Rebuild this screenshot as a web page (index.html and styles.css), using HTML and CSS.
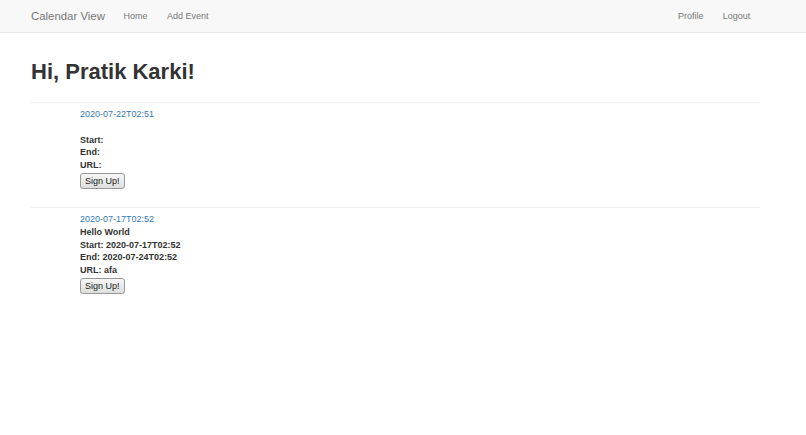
FILE: index.html
```html
<!DOCTYPE html>
<html lang="en">
<head>
    <meta charset="UTF-8">
    <meta name="viewport" content="width=device-width, initial-scale=1.0">
    <title>Calendar View</title>
    <link rel="stylesheet" href="styles.css">
</head>
<body>

<nav class="navbar">
    <div class="navbar-inner">
        <a class="brand" href="#">Calendar View</a>
        <ul class="nav">
            <li><a href="#">Home</a></li>
            <li><a href="#">Add Event</a></li>
        </ul>
        <ul class="nav nav-right">
            <li><a href="#">Profile</a></li>
            <li><a href="#">Logout</a></li>
        </ul>
    </div>
</nav>

<div class="container">
    <h1>Hi, Pratik Karki!</h1>

    <hr>
    <div class="event">
        <a class="event-date" href="#">2020-07-22T02:51</a>
        <p class="event-title"></p>
        <p>Start: </p>
        <p>End: </p>
        <p>URL: </p>
        <button type="button">Sign Up!</button>
    </div>

    <hr>
    <div class="event">
        <a class="event-date" href="#">2020-07-17T02:52</a>
        <p class="event-title">Hello World</p>
        <p>Start: 2020-07-17T02:52</p>
        <p>End: 2020-07-24T02:52</p>
        <p>URL: afa</p>
        <button type="button">Sign Up!</button>
    </div>
</div>

</body>
</html>
```

FILE: styles.css
```css
* {
    box-sizing: border-box;
}

body {
    margin: 0;
    font-family: "Liberation Sans", Arial, sans-serif;
    font-size: 9px;
    line-height: 12.8px;
    color: #333;
    background-color: #fff;
}

a {
    text-decoration: none;
}

.navbar {
    background-color: #f8f8f8;
    border-bottom: 1px solid #e7e7e7;
}

.navbar-inner {
    display: flex;
    align-items: center;
    height: 32px;
    padding: 0 46px 0 31px;
}

.brand {
    color: #777;
    font-size: 11.4px;
    margin-right: 9px;
}

.nav {
    display: flex;
    list-style: none;
    margin: 0;
    padding: 0;
}

.nav a {
    display: block;
    padding: 0 9.7px;
    color: #777;
    font-size: 9px;
}

.nav-right {
    margin-left: auto;
}

.container {
    padding: 0 46px 0 31px;
}

h1 {
    margin: 26px 0 0;
    font-size: 22px;
    line-height: 25px;
    font-weight: bold;
    color: #333;
}

hr {
    margin: 18px 0 5px;
    border: 0;
    border-top: 1px solid #eee;
}

.event {
    margin-left: 49px;
    font-weight: bold;
}

.event-date {
    display: block;
    font-weight: normal;
    color: #337ab7;
}

.event p {
    margin: 0;
    min-height: 12.8px;
}

button {
    display: block;
    margin-top: 1px;
    padding: 1px 4px;
    height: 16px;
    font-family: "Liberation Sans", Arial, sans-serif;
    font-size: 9px;
    color: #222;
    background: linear-gradient(#f6f6f6, #dedede);
    border: 1px solid #999;
    border-radius: 3px;
}

.event + hr {
    margin-top: 18px;
}
```
